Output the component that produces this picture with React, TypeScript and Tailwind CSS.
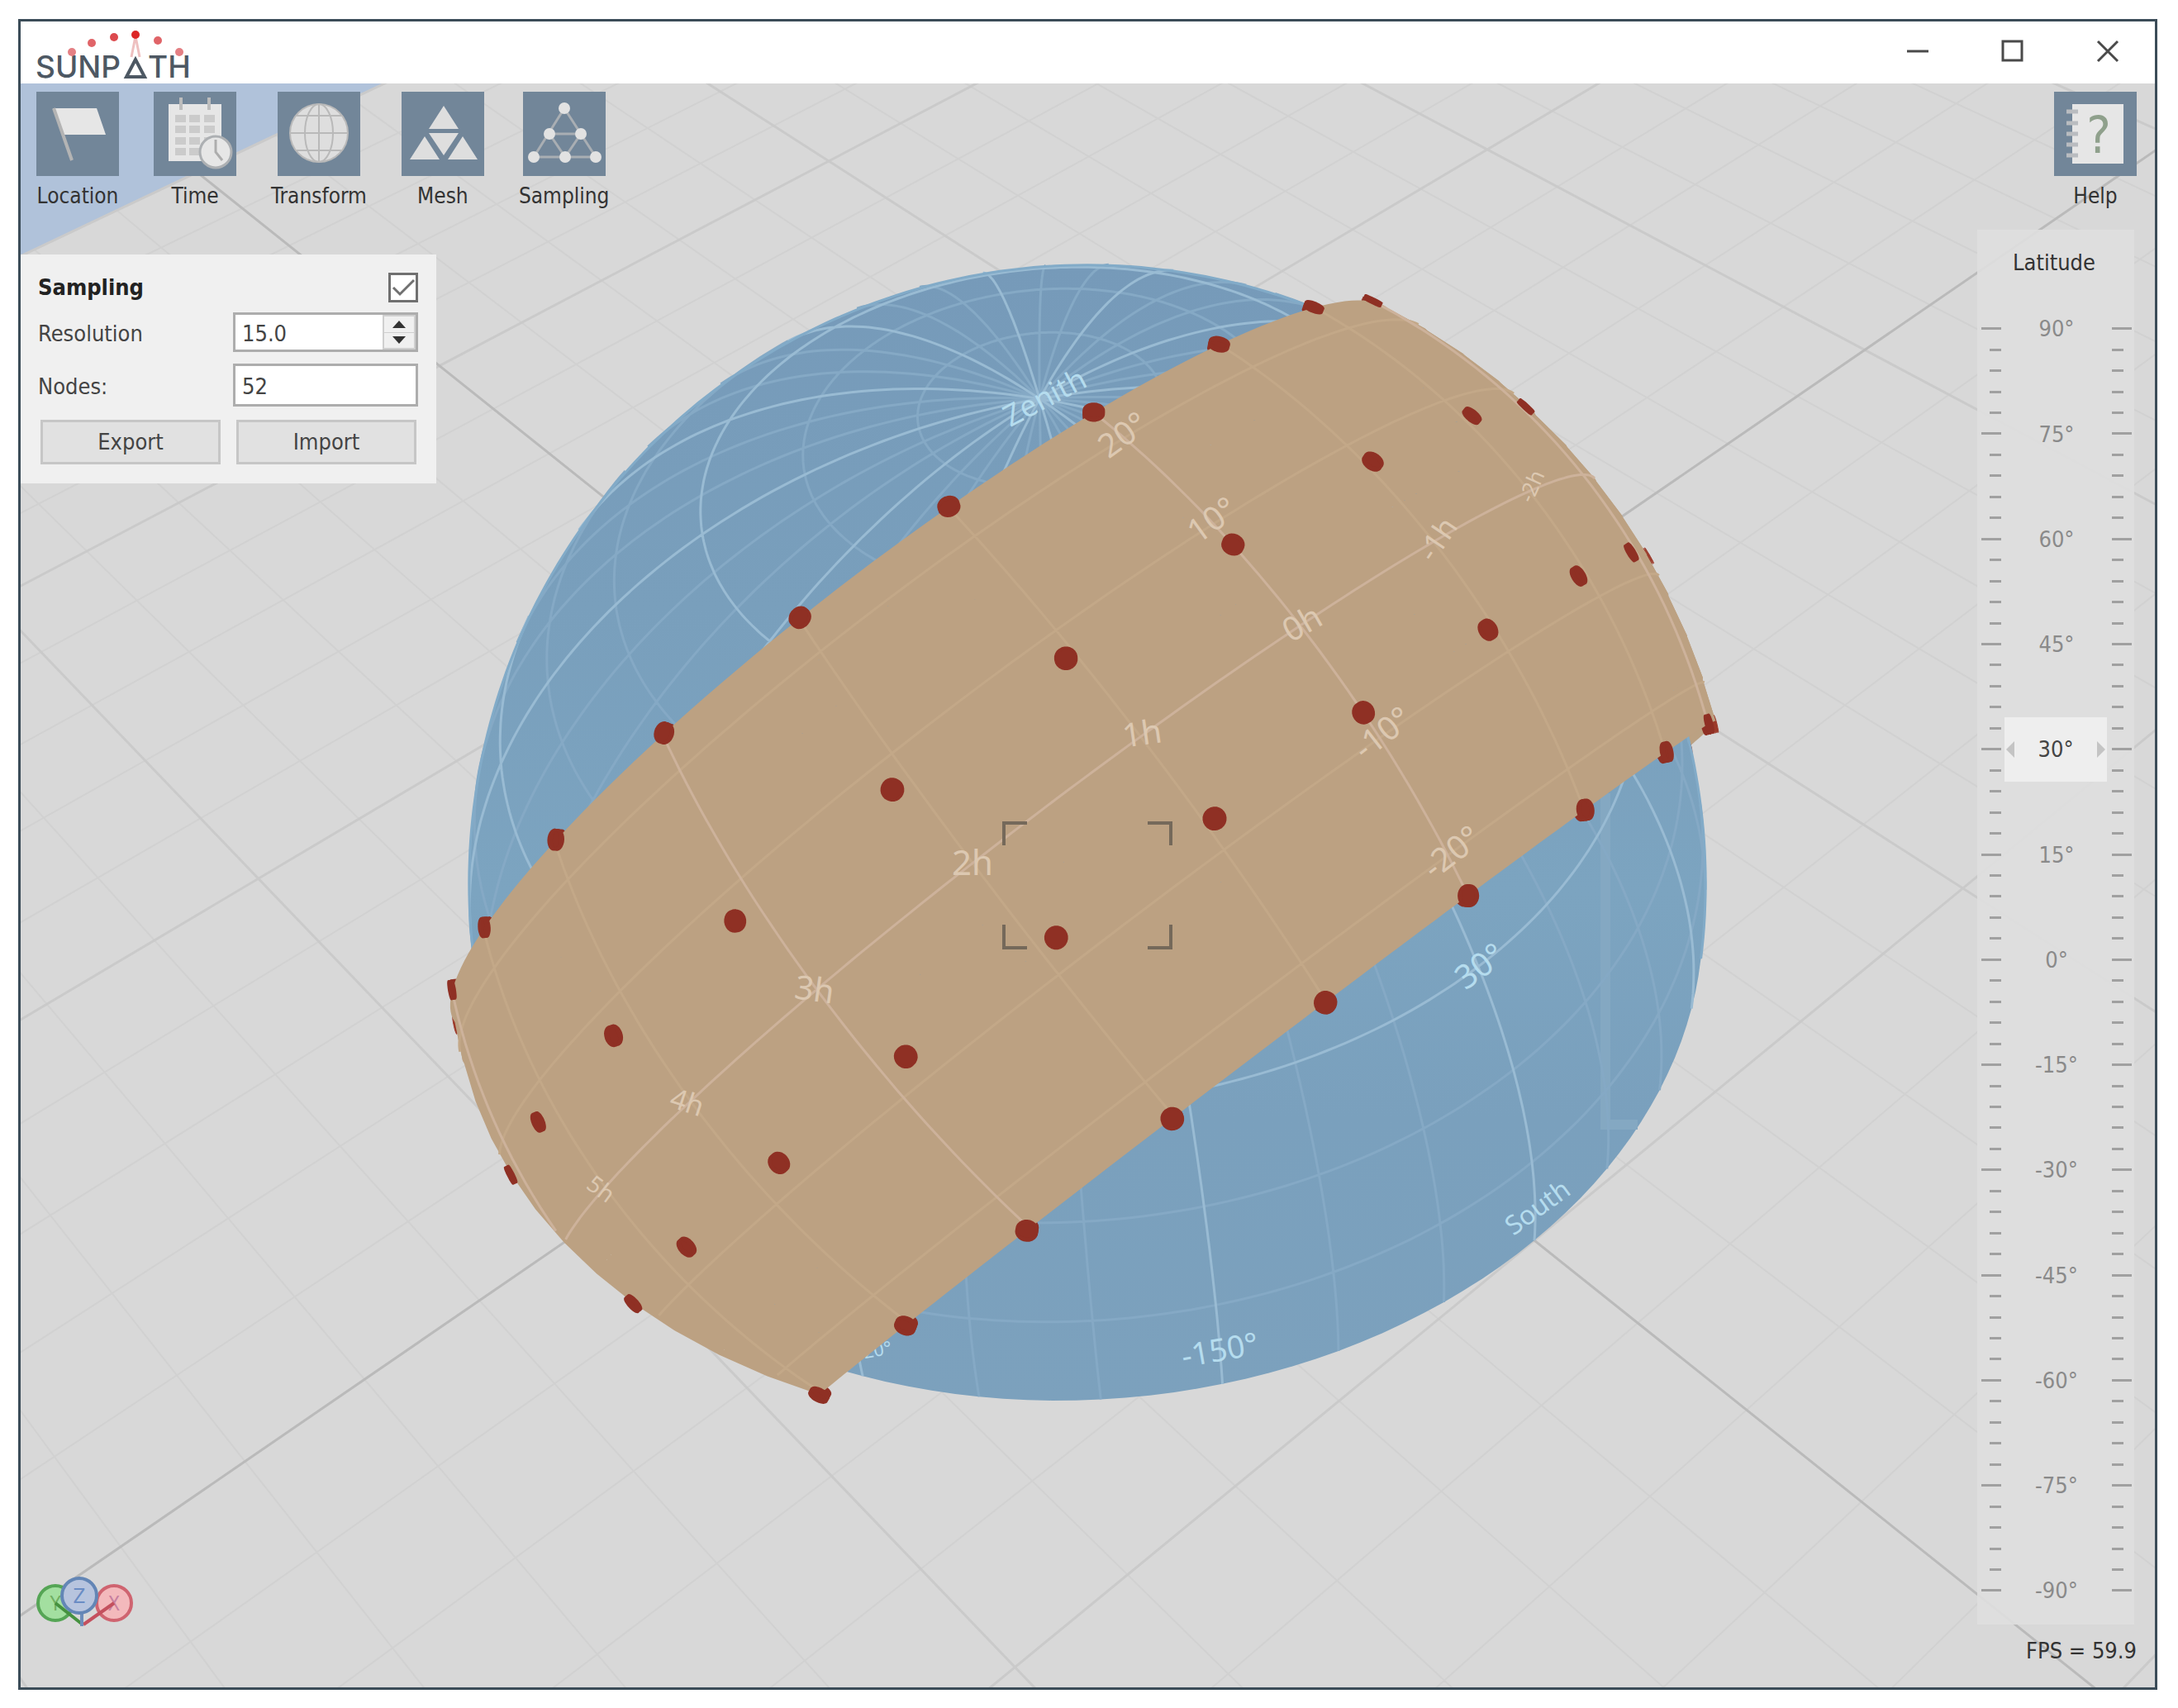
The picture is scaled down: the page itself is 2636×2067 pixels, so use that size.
import { useState, type ReactNode } from 'react';

type Vec = [number, number, number];

// Camera: screen axes of the world directions, x right, y up, z towards the viewer
const ZENITH: Vec = [-0.067, 0.68, 0.73];
const SOUTH: Vec = [0.656, -0.524, 0.543];
const EAST: Vec = [0.752, 0.516, -0.411];
const SCALE = 732;
const PERSPECTIVE = 0.207;
const CENTER = { x: 1316, y: 1069 };

const BELT_RADIUS = 1.048;
const LATITUDE = 30;
const TILT = 23.44;
const rad = (deg: number) => (deg * Math.PI) / 180;

const mix = (a: number, b: number, c: number): Vec => [
  a * EAST[0] + b * SOUTH[0] + c * ZENITH[0],
  a * EAST[1] + b * SOUTH[1] + c * ZENITH[1],
  a * EAST[2] + b * SOUTH[2] + c * ZENITH[2],
];
const times = (p: Vec, k: number): Vec => [p[0] * k, p[1] * k, p[2] * k];
const height = (p: Vec) => p[0] * ZENITH[0] + p[1] * ZENITH[1] + p[2] * ZENITH[2];

function project(p: Vec) {
  const k = SCALE / (1 - PERSPECTIVE * p[2]);
  return `${(CENTER.x + p[0] * k).toFixed(1)} ${(CENTER.y - p[1] * k).toFixed(1)}`;
}

// Point of the sky by elevation and azimuth (azimuth counted from south to east)
function horizontal(elevation: number, azimuth: number): Vec {
  const c = Math.cos(rad(elevation));
  return mix(c * Math.sin(rad(azimuth)), c * Math.cos(rad(azimuth)), Math.sin(rad(elevation)));
}

// Point of the sky by hour angle and declination, both in degrees
function equatorial(hour: number, declination: number): Vec {
  const ch = Math.cos(rad(declination)) * Math.cos(rad(hour));
  const sh = Math.cos(rad(declination)) * Math.sin(rad(hour));
  const sd = Math.sin(rad(declination));
  const sl = Math.sin(rad(LATITUDE));
  const cl = Math.cos(rad(LATITUDE));
  return mix(-sh, ch * sl - sd * cl, ch * cl + sd * sl);
}

const sunset = (declination: number) =>
  (Math.acos(-Math.tan(rad(LATITUDE)) * Math.tan(rad(declination))) * 180) / Math.PI;

// Joins points into a path and breaks it where a point is not visible
function trace(points: Vec[], visible: (p: Vec) => boolean) {
  let d = '';
  let pen = false;
  points.forEach((p) => {
    if (visible(p)) {
      d += `${pen ? 'L' : 'M'}${project(p)}`;
      pen = true;
    } else {
      pen = false;
    }
  });
  return d;
}

const range = (from: number, to: number, steps: number) =>
  Array.from({ length: steps + 1 }, (_, i) => from + ((to - from) * i) / steps);

// The ground reaches 4 units east and west, 3 units north and south
function groundLines(level: 'axis' | 'major' | 'minor') {
  let d = '';
  for (let i = -20; i <= 20; i++) {
    const kind = i === 0 ? 'axis' : i % 5 === 0 ? 'major' : 'minor';
    if (kind !== level) continue;
    const t = i / 5;
    d += `M${project(mix(t, -3, 0))}L${project(mix(t, 3, 0))}`;
    if (Math.abs(t) <= 3) d += `M${project(mix(-4, t, 0))}L${project(mix(4, t, 0))}`;
  }
  return d;
}

const domeVisible = (p: Vec) => p[2] >= PERSPECTIVE;

function domeLines(major: boolean) {
  let d = '';
  for (let e = 10; e < 90; e += 10) {
    if ((e % 30 === 0) === major) d += trace(range(0, 360, 360).map((a) => horizontal(e, a)), domeVisible);
  }
  for (let a = 0; a < 360; a += 10) {
    if ((a % 30 === 0) === major) d += trace(range(0, 90, 90).map((e) => horizontal(e, a)), domeVisible);
  }
  return d;
}

function domeOutline() {
  const ring = range(0, 360, 180).map((a) => horizontal(0, a));
  const r = Math.sqrt(1 - PERSPECTIVE * PERSPECTIVE);
  const edge = range(0, 360, 360)
    .map((a): Vec => [r * Math.cos(rad(a - 90)), r * Math.sin(rad(a - 90)), PERSPECTIVE])
    .filter((p) => height(p) >= 0);
  return { ring: `M${ring.map(project).join('L')}Z`, edge: `M${edge.map(project).join('L')}` };
}

const beltVisible = (p: Vec) => p[2] >= PERSPECTIVE * BELT_RADIUS * BELT_RADIUS;

function beltCells(front: boolean) {
  const rows = range(-TILT, TILT, 12);
  const cols = range(-1, 1, 120);
  const at = (declination: number, u: number) =>
    times(equatorial(u * sunset(declination), declination), BELT_RADIUS);
  let d = '';
  for (let i = 0; i < 12; i++) {
    for (let j = 0; j < 120; j++) {
      const cell = [at(rows[i], cols[j]), at(rows[i + 1], cols[j]), at(rows[i + 1], cols[j + 1]), at(rows[i], cols[j + 1])];
      if (cell.some(beltVisible) === front) d += `M${cell.map(project).join('L')}Z`;
    }
  }
  return d;
}

function beltLines(major: boolean) {
  const visible = (p: Vec) => beltVisible(p) && height(p) >= 0;
  let d = '';
  for (let dec = -20; dec <= 20; dec += 10) {
    if ((dec === 0) === major) {
      const limit = sunset(dec);
      d += trace(range(-limit, limit, 160).map((h) => times(equatorial(h, dec), BELT_RADIUS)), visible);
    }
  }
  for (let h = -6; h <= 6; h++) {
    if ((h % 3 === 0) === major) {
      d += trace(range(-TILT, TILT, 40).map((dec) => times(equatorial(h * 15, dec), BELT_RADIUS)), visible);
    }
  }
  return d;
}

// Sample rows: declination and number of nodes from sunrise to sunset
const nodeRows = [
  { declination: TILT, count: 15 },
  { declination: TILT / 3, count: 13 },
  { declination: -TILT / 3, count: 13 },
  { declination: -TILT, count: 11 },
];
const nodeCount = nodeRows.reduce((sum, row) => sum + row.count, 0);

// Nodes are short cylinders, stacked from discs between two radii
function nodeDiscs(front: boolean, from: number, to: number) {
  let d = '';
  nodeRows.forEach(({ declination, count }) => {
    const limit = sunset(declination);
    range(-limit, limit, count - 1).forEach((hour) => {
      const center = equatorial(hour, declination);
      if (beltVisible(times(center, BELT_RADIUS)) !== front) return;
      range(from, to, 6).forEach((lift) => {
        const disc = range(0, 360, 24).map((a) => {
          const dec = declination + 0.78 * Math.sin(rad(a));
          const h = hour + (0.78 * Math.cos(rad(a))) / Math.cos(rad(declination));
          return times(equatorial(h, dec), BELT_RADIUS + lift);
        });
        d += `M${disc.map(project).join('L')}Z`;
      });
    });
  });
  return d;
}

const beltLabels = [
  { text: '20°', x: 1358, y: 525, size: 40, turn: -36 },
  { text: '10°', x: 1466, y: 628, size: 40, turn: -36 },
  { text: '-10°', x: 1672, y: 886, size: 40, turn: -38 },
  { text: '-20°', x: 1756, y: 1030, size: 40, turn: -38 },
  { text: '-2h', x: 1853, y: 588, size: 26, turn: -66 },
  { text: '-1h', x: 1739, y: 652, size: 36, turn: -56 },
  { text: '0h', x: 1575, y: 753, size: 40, turn: -30 },
  { text: '1h', x: 1382, y: 886, size: 40, turn: -8 },
  { text: '2h', x: 1177, y: 1042, size: 42, turn: 0 },
  { text: '3h', x: 986, y: 1196, size: 40, turn: 8 },
  { text: '4h', x: 832, y: 1333, size: 34, turn: 18 },
  { text: '5h', x: 728, y: 1438, size: 28, turn: 36 },
];

const domeLabels = [
  { text: 'Zenith', x: 1264, y: 480, size: 36, turn: -28 },
  { text: '30°', x: 1790, y: 1168, size: 40, turn: -36 },
  { text: 'South', x: 1860, y: 1460, size: 32, turn: -36 },
  { text: '-150°', x: 1476, y: 1632, size: 38, turn: -10 },
  { text: '-120°', x: 1052, y: 1634, size: 22, turn: -10 },
];

function SceneLabels({ labels }: { labels: typeof beltLabels }) {
  return labels.map(({ text, x, y, size, turn }) => (
    <text
      key={text}
      fontSize={size}
      textAnchor="middle"
      dominantBaseline="central"
      transform={`translate(${x} ${y}) rotate(${turn})`}
    >
      {text}
    </text>
  ));
}

function Scene() {
  const dome = domeOutline();
  return (
    <svg
      viewBox="25 101 2583 1941"
      preserveAspectRatio="xMidYMid slice"
      className="absolute inset-0 h-full w-full font-['Noto_Sans',sans-serif]"
      fill="none"
      role="img"
      aria-label="Sky dome with sun path"
    >
      <path d={`M${[mix(-4, -3, 0), mix(4, -3, 0), mix(4, 3, 0), mix(-4, 3, 0)].map(project).join('L')}Z`} fill="#d8d8d8" />
      <path d={groundLines('minor')} stroke="#d1d1d1" strokeWidth="2" />
      <path d={groundLines('major')} stroke="#cacaca" strokeWidth="3" />
      <path d={groundLines('axis')} stroke="#bababa" strokeWidth="3" />

      <path d={beltCells(false)} fill="#bba182" />
      <path d={nodeDiscs(false, -0.008, 0.004)} fill="#9c3a2a" stroke="#9c3a2a" />

      <defs>
        <linearGradient id="sky" gradientUnits="userSpaceOnUse" x1="0" y1="320" x2="0" y2="1700">
          <stop offset="0" stopColor="#769ab9" />
          <stop offset="0.3" stopColor="#799fbc" />
          <stop offset="0.55" stopColor="#7ca4c0" />
          <stop offset="0.75" stopColor="#7aa0bd" />
          <stop offset="1" stopColor="#7ca1bd" />
        </linearGradient>
      </defs>
      <path d={dome.ring} fill="url(#sky)" />
      <path d={dome.edge} fill="url(#sky)" />
      <path d="M1943 960V1361H1982" stroke="#84a8c2" strokeWidth="12" />
      <path d={domeLines(false)} stroke="#85a9c5" strokeWidth="3" />
      <path d={domeLines(true)} stroke="#99bbd3" strokeWidth="3" />
      <path d={dome.edge} stroke="#82abc8" strokeWidth="3" />
      <g fill="#b5dcee">
        <SceneLabels labels={domeLabels} />
      </g>

      <path d={nodeDiscs(true, -0.008, 0)} fill="#8f3024" stroke="#8f3024" strokeWidth="2" />
      <path d={beltCells(true)} fill="#bca182" />
      <path d={beltLines(false)} stroke="#c3a888" strokeWidth="3" />
      <path d={beltLines(true)} stroke="#cdb29b" strokeWidth="3" />
      <g fill="#dcc8b1">
        <SceneLabels labels={beltLabels} />
      </g>
      <path d={nodeDiscs(true, -0.002, 0.004)} fill="#8f3024" stroke="#8f3024" strokeWidth="2" strokeLinejoin="round" />

      <path
        d="M1215 1023V996H1243M1389 996H1417V1023M1417 1119V1147H1389M1243 1147H1215V1119"
        stroke="#75695a"
        strokeWidth="4"
      />
    </svg>
  );
}

function Logo() {
  return (
    <svg viewBox="0 0 190 72" className="h-[72px] w-[190px] overflow-visible font-['Inter',sans-serif]" role="img" aria-label="Sunpath">
      <g fill="#4d5863" fontSize="37" fontWeight="500">
        <text x="-2" y="60">SUNP</text>
        <text x="134" y="60">TH</text>
      </g>
      <path d="M119 38L108 59H130Z" fill="none" stroke="#4d5863" strokeWidth="4" />
      <path d="M119 10L114 35M119 10L124 35" stroke="#eec0c0" strokeWidth="3" />
      <circle cx="119" cy="8" r="5" fill="#dc2626" />
      <circle cx="93" cy="11" r="5" fill="#dc4a4e" />
      <circle cx="146" cy="15" r="5" fill="#e06468" />
      <circle cx="66" cy="18" r="5" fill="#e06468" />
      <circle cx="42" cy="29" r="5" fill="#e48084" />
      <circle cx="172" cy="29" r="5" fill="#e48084" />
    </svg>
  );
}

function WindowButton({ label, children }: { label: string; children: ReactNode }) {
  return (
    <button type="button" aria-label={label} className="flex w-[115px] items-center justify-center">
      <svg viewBox="0 0 28 28" className="size-7" fill="none" stroke="#4a4a4a" strokeWidth="3">
        {children}
      </svg>
    </button>
  );
}

const tools: { label: string; icon: ReactNode }[] = [
  {
    label: 'Location',
    icon: (
      <>
        <path d="M20 20H73L84 52H33Z" fill="#e6e6e6" />
        <path d="M21 20L43 83" stroke="#b4b4b4" strokeWidth="4" />
      </>
    ),
  },
  {
    label: 'Time',
    icon: (
      <>
        <rect x="18" y="15" width="64" height="69" fill="#e6e6e6" />
        <path d="M33 7V22M67 7V22" stroke="#bdbdbd" strokeWidth="4" />
        {[28, 41, 55, 68].map((y) => (
          <path key={y} d={`M26 ${y}h13v9h-13zM43 ${y}h13v9h-13zM61 ${y}h13v9h-13z`} fill="#cbcbcb" />
        ))}
        <circle cx="75" cy="73" r="19" fill="#e6e6e6" stroke="#adb0b3" strokeWidth="3" />
        <path d="M75 58V73L83 83" stroke="#adadad" strokeWidth="3" />
      </>
    ),
  },
  {
    label: 'Transform',
    icon: (
      <>
        <circle cx="50" cy="50" r="35" fill="#dedede" />
        <g stroke="#b9b9b9" strokeWidth="2">
          <circle cx="50" cy="50" r="35" />
          <ellipse cx="50" cy="50" rx="17" ry="35" />
          <path d="M50 15V85M15 50H85M23 29H77M23 71H77" />
        </g>
      </>
    ),
  },
  {
    label: 'Mesh',
    icon: <path d="M51 17L33 45H69ZM33 50H69L51 77ZM28 54L10 82H46ZM74 54L56 82H92Z" fill="#dedede" />,
  },
  {
    label: 'Sampling',
    icon: (
      <>
        <path d="M50 20L13 79H88ZM32 51H70L51 79Z" stroke="#a9aeb3" strokeWidth="3" />
        {[[50, 20], [32, 51], [70, 51], [13, 79], [51, 79], [88, 79]].map(([x, y]) => (
          <circle key={`${x}-${y}`} cx={x} cy={y} r="7" fill="#e2e2e2" />
        ))}
      </>
    ),
  },
];

function ToolButton({ label, children }: { label: string; children: ReactNode }) {
  return (
    <button type="button" className="flex flex-col items-center gap-2 text-[26px] text-[#333]">
      <svg viewBox="0 0 100 102" className="h-[102px] w-[100px] bg-[#728699]" fill="none">
        {children}
      </svg>
      <span className="leading-8">{label}</span>
    </button>
  );
}

function SamplingPanel() {
  const [enabled, setEnabled] = useState(true);
  const [resolution, setResolution] = useState(15);
  const step = (by: number) => setResolution((value) => Math.max(1, value + by));

  return (
    <section className="flex w-[503px] flex-col bg-[#f0f0f0] pt-[18px] pr-[22px] pb-[23px] pl-[21px] text-[#444]">
      <div className="flex h-11 items-center justify-between">
        <h2 className="font-bold text-[#222]">Sampling</h2>
        <label className="relative flex size-9">
          <input
            type="checkbox"
            aria-label="Enable sampling"
            checked={enabled}
            onChange={(e) => setEnabled(e.target.checked)}
            className="size-9 appearance-none border-[3px] border-[#707070] bg-white"
          />
          {enabled && (
            <svg viewBox="0 0 36 36" className="pointer-events-none absolute inset-0" fill="none">
              <path d="M6 18L14 26L31 9" stroke="#707070" strokeWidth="3" />
            </svg>
          )}
        </label>
      </div>
      <div className="mt-2 flex h-12 items-center justify-between">
        <label htmlFor="resolution" className="pt-1">Resolution</label>
        <div className="flex h-12 w-[224px] border-3 border-[#adadad] bg-white">
          <input
            id="resolution"
            type="text"
            value={resolution.toFixed(1)}
            onChange={(e) => setResolution(Number(e.target.value) || 1)}
            className="min-w-0 flex-1 px-2 pt-1"
          />
          <div className="flex w-10 flex-col gap-px bg-[#cfcfcf] p-0.5">
            <button type="button" aria-label="Increase" onClick={() => step(1)} className="flex flex-1 items-center justify-center bg-[#f0f0f0]">
              <svg viewBox="0 0 16 9" className="h-[9px] w-4">
                <path d="M8 0L16 9H0Z" fill="#333" />
              </svg>
            </button>
            <button type="button" aria-label="Decrease" onClick={() => step(-1)} className="flex flex-1 items-center justify-center bg-[#f0f0f0]">
              <svg viewBox="0 0 16 9" className="h-[9px] w-4">
                <path d="M8 9L16 0H0Z" fill="#333" />
              </svg>
            </button>
          </div>
        </div>
      </div>
      <div className="mt-[14px] flex h-[52px] items-center justify-between">
        <label htmlFor="nodes" className="pt-1">Nodes:</label>
        <input
          id="nodes"
          type="text"
          readOnly
          value={nodeCount}
          className="h-[52px] w-[224px] border-3 border-[#adadad] bg-white px-2 pt-0.5"
        />
      </div>
      <div className="mt-4 flex justify-between pr-0.5 pl-[3px]">
        <button type="button" className="h-[54px] w-[218px] border-3 border-[#c6c6c6] bg-[#e1e1e1]">
          Export
        </button>
        <button type="button" className="h-[54px] w-[218px] border-3 border-[#c6c6c6] bg-[#e1e1e1]">
          Import
        </button>
      </div>
    </section>
  );
}

function AxesGizmo() {
  return (
    <svg viewBox="0 0 120 62" className="h-[62px] w-[120px]" fill="none" strokeWidth="4" role="img" aria-label="Axes">
      <g fontSize="24" textAnchor="middle">
        <circle cx="25" cy="32" r="21" fill="#a3dfa0" stroke="#55a555" />
        <text x="25" y="41" fill="#6fae62">Y</text>
        <path d="M25 32L58 58" stroke="#45913f" />
        <circle cx="96" cy="32" r="21" fill="#f3b9bc" stroke="#cf6470" />
        <text x="96" y="41" fill="#c77fa0">X</text>
        <path d="M96 32L59 58" stroke="#c4505e" />
        <path d="M57 42V60" stroke="#6d8dba" />
        <circle cx="54" cy="23" r="21" fill="#b7c4de" stroke="#6386b6" />
        <text x="54" y="32" fill="#6a8cc4">Z</text>
      </g>
    </svg>
  );
}

function LatitudeSlider() {
  const [latitude, setLatitude] = useState(LATITUDE);
  const marks = range(90, -90, 60);

  return (
    <div className="relative mt-[25px] mr-[3px] flex w-[190px] flex-1 flex-col bg-[#dfdfdf]/90 pb-7">
      <label htmlFor="latitude" className="flex h-[107px] items-start justify-center pt-6 pr-1 leading-8 text-[#333]">
        Latitude
      </label>
      <div className="flex flex-1 flex-col">
        {marks.map((mark) => {
          const major = mark % 15 === 0;
          return (
            <div key={mark} className="relative flex min-h-0 flex-1 items-center pr-[3px] pl-[5px]">
              <div className="flex w-6 justify-end">
                <div className={major ? 'h-[3px] w-6 bg-[#a0a0a0]' : 'h-[3px] w-[14px] bg-[#a0a0a0]'} />
              </div>
              <div className="flex-1 text-center leading-none text-[#8a8a8a]">
                {major && mark !== latitude && `${mark}°`}
              </div>
              <div className="w-6">
                <div className={major ? 'h-[3px] w-6 bg-[#a0a0a0]' : 'h-[3px] w-[14px] bg-[#a0a0a0]'} />
              </div>
              {mark === latitude && (
                <div className="absolute inset-x-[33px] -inset-y-[26px] flex items-center justify-between bg-[#eeeeee] px-0.5 text-[#444]">
                  <svg viewBox="0 0 10 20" className="h-5 w-2.5">
                    <path d="M10 0V20L0 10Z" fill="#c4c4c4" />
                  </svg>
                  <span>{mark}°</span>
                  <svg viewBox="0 0 10 20" className="h-5 w-2.5">
                    <path d="M0 0V20L10 10Z" fill="#c4c4c4" />
                  </svg>
                </div>
              )}
            </div>
          );
        })}
      </div>
      <input
        id="latitude"
        type="range"
        min={-90}
        max={90}
        step={3}
        value={latitude}
        onChange={(e) => setLatitude(Number(e.target.value))}
        className="absolute inset-x-0 top-[107px] bottom-7 cursor-pointer opacity-0 [direction:rtl] [writing-mode:vertical-lr]"
      />
    </div>
  );
}

export default function App() {
  return (
    <div className="flex h-screen bg-white pt-[23px] pr-[25px] pb-[22px] pl-[22px] font-['DejaVu_Sans_Condensed','Noto_Sans',sans-serif] text-[27px]">
      <div className="flex min-w-0 flex-1 flex-col border-[3px] border-[#3b4c58]">
        <header className="flex h-[75px] items-stretch justify-between bg-white pl-5">
          <div className="pt-2">
            <Logo />
          </div>
          <div className="flex pb-1">
            <WindowButton label="Minimize">
              <path d="M1 14H27" />
            </WindowButton>
            <WindowButton label="Maximize">
              <rect x="2" y="2" width="23" height="23" />
            </WindowButton>
            <WindowButton label="Close">
              <path d="M2 2L26 26M26 2L2 26" />
            </WindowButton>
          </div>
        </header>

        <main className="relative flex min-h-0 flex-1 justify-between overflow-hidden bg-[#b0c2da]">
          <Scene />
          <div className="relative flex flex-col">
            <nav className="flex h-[207px] gap-[42px] pt-[10px] pl-[19px]">
              {tools.map(({ label, icon }) => (
                <ToolButton key={label} label={label}>
                  {icon}
                </ToolButton>
              ))}
            </nav>
            <SamplingPanel />
            <div className="mt-auto mb-[72px] ml-[17px]">
              <AxesGizmo />
            </div>
          </div>

          <div className="relative flex flex-col items-end pt-[10px] pr-[22px]">
            <ToolButton label="Help">
              <rect x="22" y="15" width="62" height="72" fill="#e6e6e6" />
              <path d="M15 24H29M15 38H29M15 51H29M15 64H29M15 77H29" stroke="#b9bcc0" strokeWidth="5" />
              <text x="54" y="74" textAnchor="middle" fontSize="62" fill="#8fa08c">
                ?
              </text>
            </ToolButton>
            <LatitudeSlider />
            <p className="h-[76px] pt-4 leading-8 text-[#333]">FPS = 59.9</p>
          </div>
        </main>
      </div>
    </div>
  );
}
